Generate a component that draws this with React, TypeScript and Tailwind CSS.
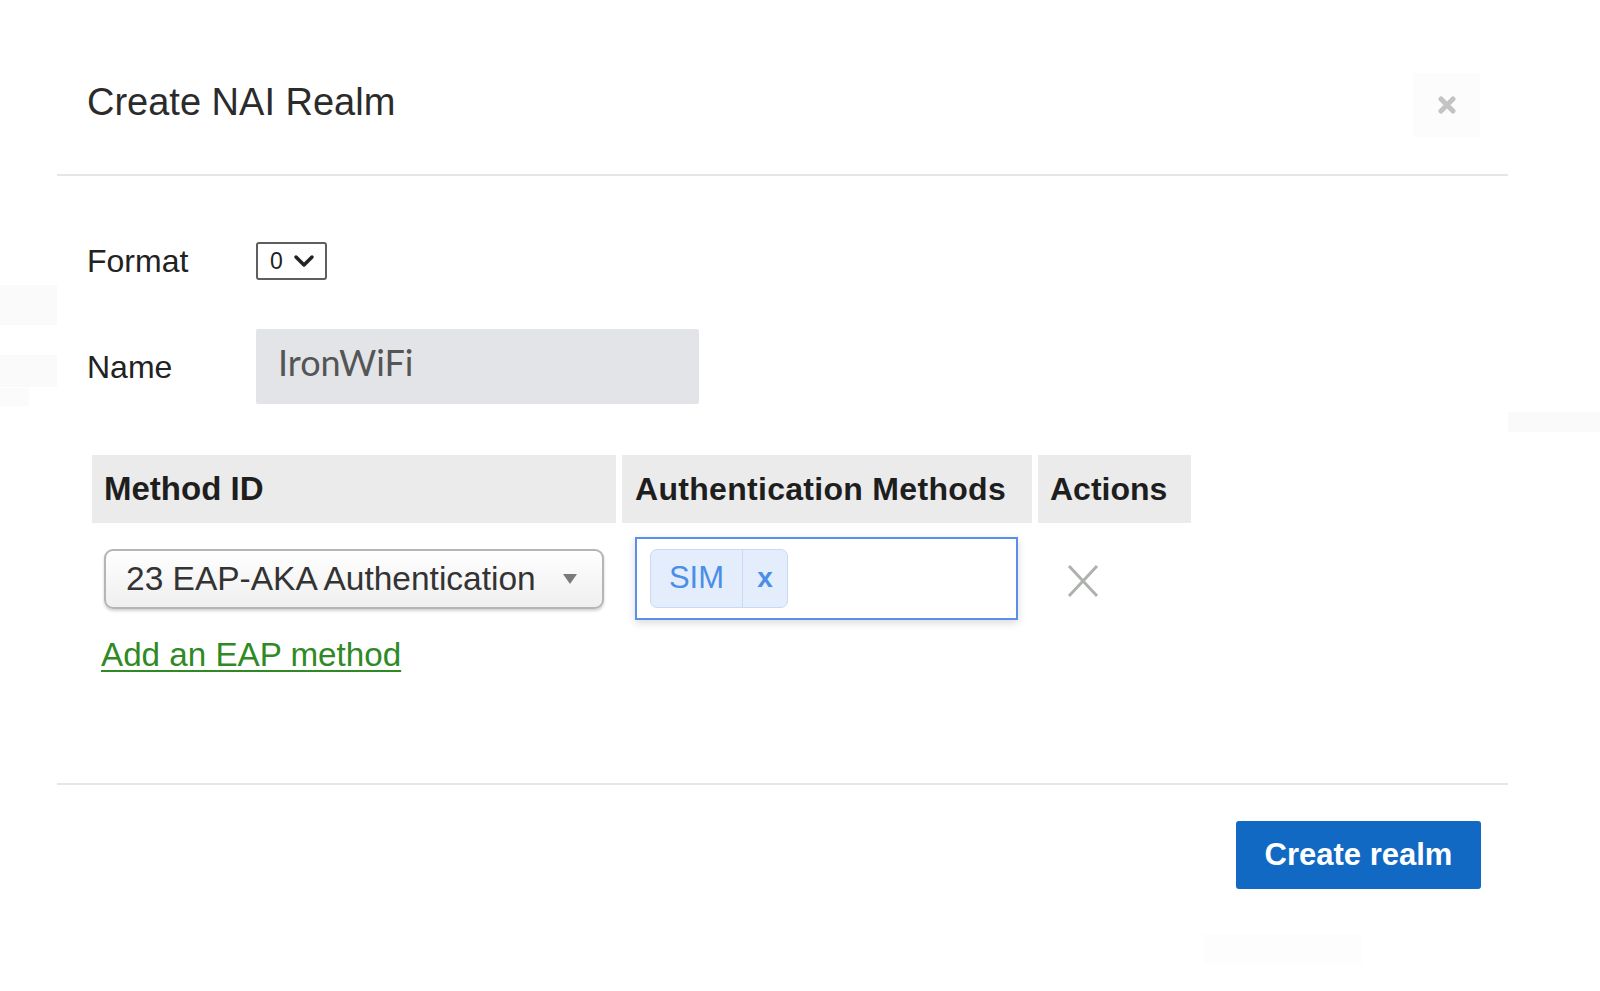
import React from "react";

export default function App() {
  return (
    <div
      className="relative w-[1600px] h-[991px] bg-white overflow-hidden text-[#222]"
      style={{ fontFamily: '"Liberation Sans", Arial, sans-serif' }}
    >
      {/* faint background artifacts */}
      <div className="absolute left-0 top-[285px] w-[57px] h-[40px] bg-[#fafafa]" />
      <div className="absolute left-0 top-[355px] w-[57px] h-[32px] bg-[#fafafa]" />
      <div className="absolute left-0 top-[388px] w-[29px] h-[18px] bg-[#fbfbfb]" />
      <div className="absolute left-[1508px] top-[412px] w-[92px] h-[20px] bg-[#fafafa]" />
      <div className="absolute left-[1204px] top-[934px] w-[158px] h-[30px] bg-[#fdfdfd]" />

      <div className="ml-[57px] w-[1451px]">
        {/* Header */}
        <div className="flex items-start justify-between h-[176px] pt-[73px] pl-[30px] pr-[28px] border-b-2 border-[#e6e6e6]">
          <h1 className="mt-[10px] text-[38px] leading-[38px] font-normal text-[#2b2b2b]">
            Create NAI Realm
          </h1>
          <button className="w-[67px] h-[64px] flex items-center justify-center bg-[#fcfcfc]">
            <svg width="18" height="18" viewBox="0 0 18 18">
              <path d="M3 3 L15 15 M15 3 L3 15" stroke="#c3c3c3" strokeWidth="5" strokeLinecap="round" />
            </svg>
          </button>
        </div>

        {/* Body */}
        <div className="pl-[30px] pt-[66px] h-[607px]">
          {/* Format */}
          <div className="flex items-center h-[38px]">
            <div className="w-[169px] text-[32px] leading-none text-[#222]">Format</div>
            <div className="w-[71px] h-[38px] border-2 border-[#5e5e5e] rounded-[3px] flex items-center pl-[12px] gap-[10px]">
              <span className="text-[23px] leading-none text-[#222]">0</span>
              <svg width="22" height="14" viewBox="0 0 22 14">
                <polyline points="3,3 11,11 19,3" fill="none" stroke="#222" strokeWidth="3.5" strokeLinecap="round" strokeLinejoin="round" />
              </svg>
            </div>
          </div>

          {/* Name */}
          <div className="flex items-center mt-[49px]">
            <div className="w-[169px] text-[32px] leading-none text-[#222]">Name</div>
            <div className="w-[443px] h-[75px] bg-[#e2e4e8] rounded-[2px] flex items-start pl-[22px] pt-[13px]">
              <span
                className="text-[36px] leading-[40px] text-[#555]"
                style={{ fontFamily: 'Lato, "Open Sans", sans-serif' }}
              >
                IronWiFi
              </span>
            </div>
          </div>

          {/* Table */}
          <div className="ml-[5px] mt-[51px]">
            <div className="flex gap-[6px] h-[68px]">
              <div className="w-[524px] bg-[#ebebeb] flex items-center pl-[12px] text-[33px] font-bold text-[#1e1e1e]">
                Method ID
              </div>
              <div className="w-[410px] bg-[#ebebeb] flex items-center pl-[13px] text-[32px] font-bold text-[#1e1e1e] tracking-[0.3px]">
                Authentication Methods
              </div>
              <div className="w-[153px] bg-[#ebebeb] flex items-center pl-[12px] text-[32px] font-bold text-[#1e1e1e]">
                Actions
              </div>
            </div>

            <div className="flex gap-[6px] items-center mt-[14px]">
              <div className="w-[524px] pl-[12px]">
                <div className="w-[500px] h-[60px] rounded-[9px] border-2 border-[#b5b5b5] bg-gradient-to-b from-white to-[#efefef] shadow-[0_2px_3px_rgba(0,0,0,0.18)] flex items-center justify-between pl-[20px] pr-[24px]">
                  <span className="text-[33.5px] leading-none text-[#333]">
                    23 EAP-AKA Authentication
                  </span>
                  <svg width="16" height="12" viewBox="0 0 16 12">
                    <polygon points="1,1 15,1 8,11" fill="#7a7a7a" />
                  </svg>
                </div>
              </div>
              <div className="w-[410px] pl-[13px]">
                <div className="w-[383px] h-[83px] border-2 border-[#5a90e8] bg-white shadow-[0_3px_8px_rgba(0,0,0,0.15)] flex items-center pl-[13px]">
                  <div className="h-[59px] flex items-stretch rounded-[7px] border border-[#c7dbf7] bg-[#e3edfc]">
                    <span className="w-[92px] flex items-center justify-center text-[31px] text-[#4a8ee8] border-r border-[#c7dbf7]">
                      SIM
                    </span>
                    <span className="w-[44px] flex items-center justify-center text-[28px] font-bold text-[#4a8ee8] pb-[2px]">
                      x
                    </span>
                  </div>
                </div>
              </div>
              <div className="w-[153px] pl-[28px] flex items-center">
                <svg width="34" height="34" viewBox="0 0 34 34" className="mt-[4px]">
                  <path d="M3 2 L31 32 M31 2 L3 32" stroke="#aeb2ad" strokeWidth="3" />
                </svg>
              </div>
            </div>

            <div className="mt-[17px] pl-[9px]">
              <a className="text-[33.2px] leading-[36px] text-[#2f8a25] underline decoration-2 underline-offset-[4px]">
                Add an EAP method
              </a>
            </div>
          </div>
        </div>

        {/* Footer */}
        <div className="border-t-2 border-[#e6e6e6] flex justify-end pr-[27px] pt-[36px]">
          <button className="w-[245px] h-[68px] rounded-[3px] bg-[#1169c3] text-white text-[31px] font-bold flex items-center justify-center">
            Create realm
          </button>
        </div>
      </div>
    </div>
  );
}
